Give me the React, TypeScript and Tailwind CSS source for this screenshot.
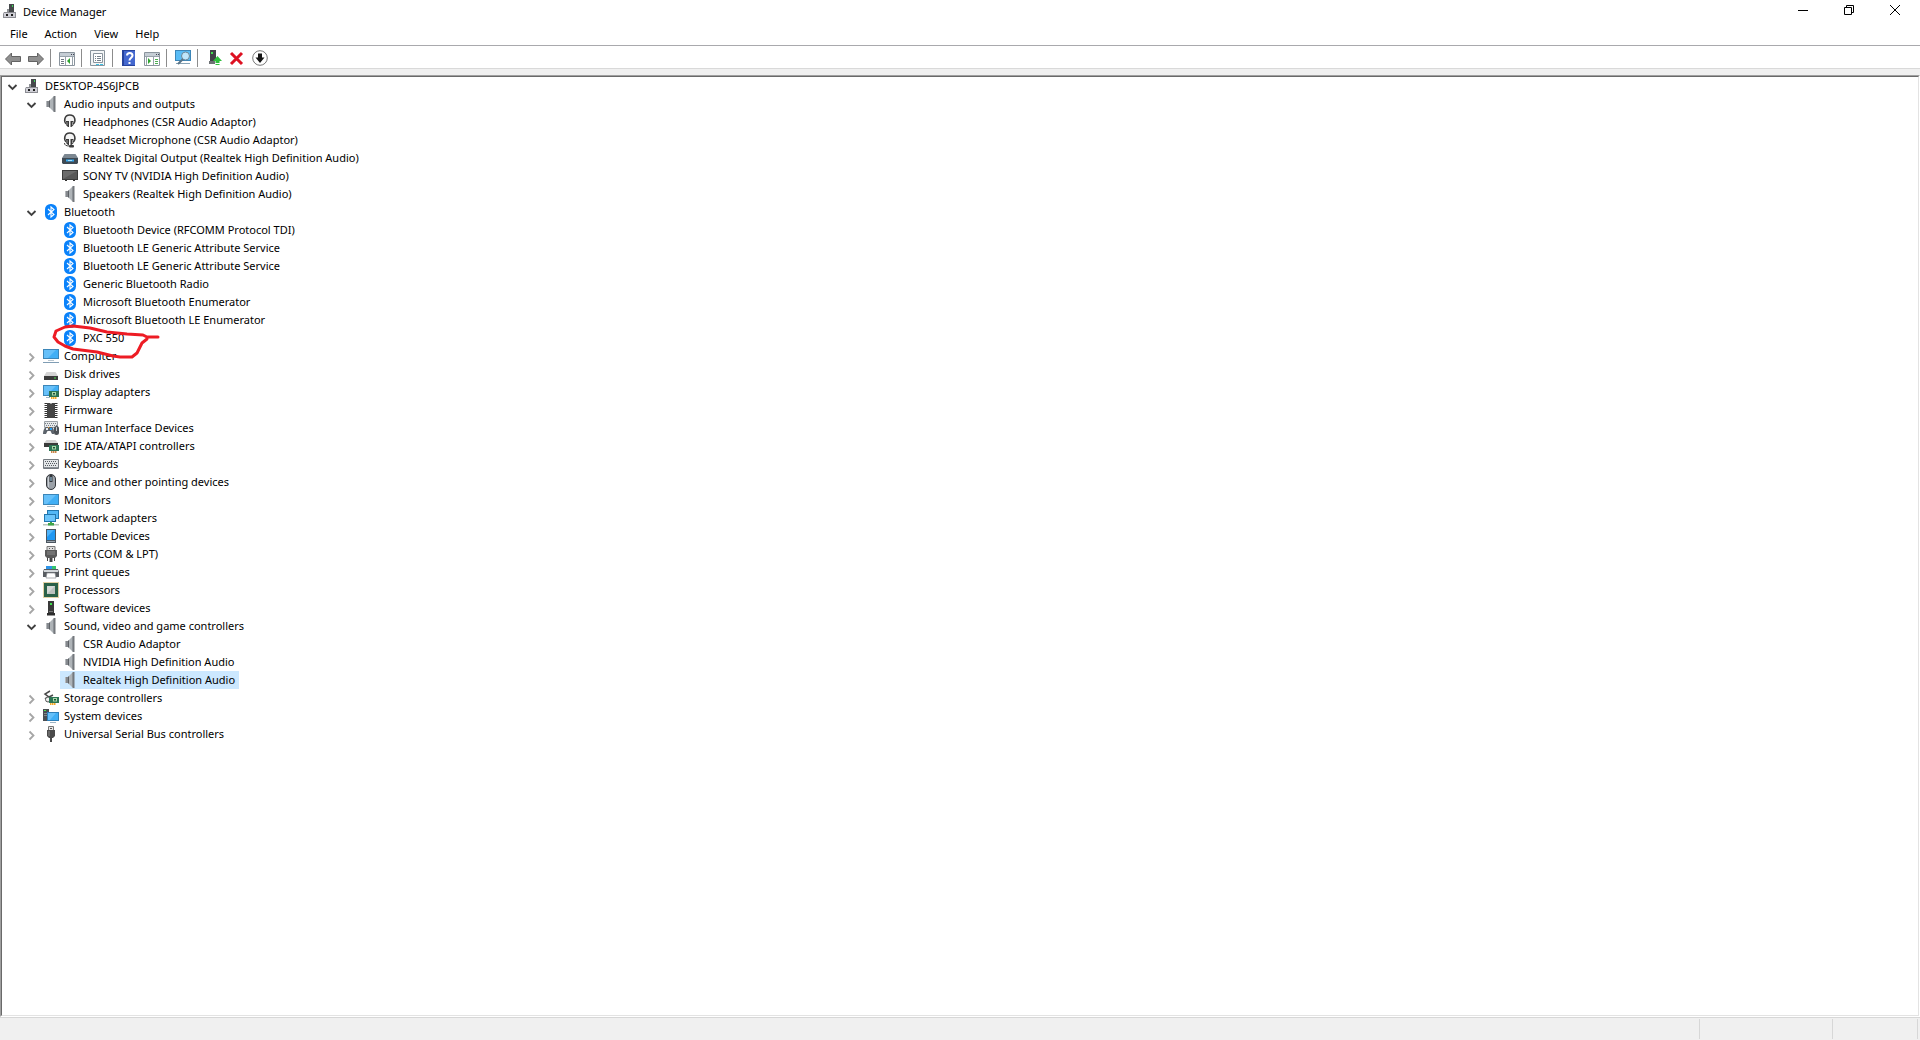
import { useState } from 'react';
import type { ReactNode } from 'react';

type Device = {
  name: string;
  icon: keyof typeof icons;
  open?: boolean;
  children?: Device[];
};

// every icon is drawn on a 16x16 grid
const icons = {
  pc: (
    <>
      <path d="M7 1h5v8H7z" fill="#45484b" />
      <path d="M10 2h1v2h-1z" fill="#3fd65a" />
      <path d="M5 6h2v3H5z" fill="#8f9296" />
      <path d="M2 9h12v6H1v-4z" fill="#8b8c92" />
      <path d="M2 10h11v4H2z" fill="#cfcfd6" />
      <path d="M4 11h2v2H4zM9 11h2v2H9z" fill="#1c1c1c" />
    </>
  ),
  speaker: (
    <>
      <path d="M3 5h3v6H3z" fill="#85898e" />
      <path d="M3 5h1v6H3z" fill="#b5b8bb" />
      <path d="M6 5l5-5v16l-5-5z" fill="#aeb3b7" />
      <path d="M6 5l1-1v8l-1-1z" fill="#5d6166" />
      <path d="M10 1l1-1v16l-1-1z" fill="#8b9095" />
      <path d="M11 0h1.5v16H11z" fill="#74787d" />
    </>
  ),
  headphones: (
    <>
      <path d="M4.5 10C1.5 8 2 1 7.8 1s6.3 7 3.3 9" fill="#f4f4f4" stroke="#3b3b3b" strokeWidth="1.5" />
      <path d="M4 7h3v6H6L4 11zM8.5 7h3v4l-2 2h-1z" fill="#3b3b3b" />
      <path d="M5 8v3M10.5 8v3" stroke="#999" />
    </>
  ),
  headset: (
    <>
      <path d="M4.5 10C1.5 8 2 1 7.8 1s6.3 7 3.3 9" fill="#f4f4f4" stroke="#3b3b3b" strokeWidth="1.5" />
      <path d="M4 7h3v6H6L4 11zM8.5 7h3v4l-2 2h-1z" fill="#3b3b3b" />
      <path d="M5 8v3M10.5 8v3" stroke="#999" />
      <path d="M2.5 11c0 2 1.5 3 5 3" fill="none" stroke="#3b3b3b" />
      <rect x="7" y="13" width="5" height="2.5" rx="1" fill="#3b3b3b" />
    </>
  ),
  receiver: (
    <>
      <path d="M2.5 4h11L16 8H0z" fill="#7c8791" />
      <path d="M0 8h16v5l-1 1H1l-1-1z" fill="#3f4a54" />
      <path d="M4 9.5h8v2H4z" fill="#35a8f0" />
      <path d="M6 10h4v1H6z" fill="#a8e0ff" />
    </>
  ),
  tv: (
    <>
      <path d="M0 2h16v10H0z" fill="#3a3a3a" />
      <path d="M1 3h14v8H1z" fill="#6a6a6a" />
      <path d="M1 11l14-8v8z" fill="#575757" />
      <path d="M3 12h2v1H3zM11 12h2v1h-2z" fill="#333" />
    </>
  ),
  bluetooth: (
    <>
      <rect x="2" y="0" width="12" height="16" rx="5.5" fill="#0a82fa" />
      <path d="M5 5l6 5.5-3 2.5V3l3 2.5L5 11" fill="none" stroke="#fff" strokeWidth="1.1" />
    </>
  ),
  computer: (
    <>
      <path d="M0 1h16v10H0z" fill="#3c86b8" />
      <path d="M1 2h14v8H1z" fill="#41aff5" />
      <path d="M1 2h12L5 10H1z" fill="#66c0f9" />
      <path d="M5 12h6v1H5z" fill="#b8c6d0" />
      <path d="M0 14h16v1H0z" fill="#7f9db4" />
    </>
  ),
  disk: (
    <>
      <path d="M3.5 6h9L15 10H1z" fill="#d4d4d4" />
      <path d="M1 10h14v4H1z" fill="#3b3b3b" />
      <path d="M11 11.5h2v1h-2z" fill="#4be04b" />
    </>
  ),
  display: (
    <>
      <path d="M0 1h16v11H0z" fill="#3c86b8" />
      <path d="M1 2h14v9H1z" fill="#41aff5" />
      <path d="M1 2h12L4 11H1z" fill="#66c0f9" />
      <path d="M3 13h4v1H3z" fill="#9db4c4" />
      <path d="M6 7h10v6H6z" fill="#2c7454" />
      <path d="M9 8h4v3.5H9z" fill="#a9d9a8" />
      <path d="M10 9h2v1.5h-2z" fill="#1d4f39" />
      <path d="M8 13h1.5v2H8zM10 13h1.5v2H10zM12 13h1.5v2H12z" fill="#efa927" />
    </>
  ),
  firmware: (
    <>
      <path d="M4 1h3l1 1 1-1h3v15H4z" fill="#454545" />
      <path d="M2.5 1v15M13.5 1v15" stroke="#333" strokeWidth="3" strokeDasharray="1 1" />
      <path d="M1.5 1v15M14.5 1v15" stroke="#999" strokeDasharray="1 1" />
    </>
  ),
  hid: (
    <>
      <path d="M1.5 1.5h13v6h-13z" fill="#e5e8ea" stroke="#9aa0a6" />
      <path d="M2 3.5h12M3 5.5h11" stroke="#7a8087" strokeDasharray="1 1" />
      <path d="M3 7h6c1.5 1 2.5 4 2 7H9L7.5 11h-3L3 14H0c0-3 1-6 3-7z" fill="#5d646c" />
      <path d="M3 8h2v2H3z" fill="#e9eef2" />
      <path d="M7 8h2v2H7z" fill="#2ea1f5" />
      <path d="M5 7h1v1H5z" fill="#f0a030" />
      <rect x="11" y="6" width="5" height="9" rx="2.5" fill="#4d5257" />
      <path d="M13.5 7v4" stroke="#c3c8cd" />
    </>
  ),
  ide: (
    <>
      <path d="M3.5 2h9L15 5H1z" fill="#d4d4d4" />
      <path d="M1 5h14v4H1z" fill="#3b3b3b" />
      <path d="M6 7h10v6H6z" fill="#2c7454" />
      <path d="M9 8h4v3.5H9z" fill="#a9d9a8" />
      <path d="M10 9h2v1.5h-2z" fill="#1d4f39" />
      <path d="M8 13h1.5v2H8zM10 13h1.5v2H10zM12 13h1.5v2H12z" fill="#c9874a" />
    </>
  ),
  keyboard: (
    <>
      <path d="M.5 3.5h15v9H.5z" fill="#e3e6e8" stroke="#747a80" />
      <path d="M2 5.5h12M3 7.5h11M2 9.5h12" stroke="#555b61" strokeDasharray="1 1" />
      <path d="M1 11h14v1H1z" fill="#8b9197" />
    </>
  ),
  mouse: (
    <>
      <rect x="3.5" y=".5" width="9" height="15" rx="4.5" fill="#9ba1a8" stroke="#33363a" />
      <path d="M5.5 3v10" stroke="#c9ced4" />
      <path d="M8 1v7" stroke="#33363a" strokeWidth="3" />
      <path d="M8 3v4" stroke="#9fd0ef" />
    </>
  ),
  monitor: (
    <>
      <path d="M0 2h16v11H0z" fill="#3c86b8" />
      <path d="M1 3h14v9H1z" fill="#41aff5" />
      <path d="M1 3h12L4 12H1z" fill="#66c0f9" />
      <path d="M4 14h8v1H4z" fill="#a7b9c5" />
    </>
  ),
  network: (
    <>
      <path d="M4 0h12v9H4z" fill="#2276ae" />
      <path d="M5 1h10v7H5z" fill="#52b7f6" />
      <path d="M1 4h12v8H1z" fill="#2276ae" />
      <path d="M2 5h10v6H2z" fill="#6cc5fb" />
      <path d="M7 12h2v2H7z" fill="#3ea549" />
      <path d="M0 14h16v1.5H0z" fill="#b9c4ba" />
      <path d="M5 13h6v2.5H5z" fill="#3ea549" />
    </>
  ),
  portable: (
    <>
      <path d="M3 1h10v14H3z" fill="#4b5660" />
      <path d="M4 2h8v10H4z" fill="#1f97f2" />
      <path d="M4 2h7L4 9z" fill="#4eb3fa" />
      <path d="M4 13h8v1H4z" fill="#9aa4ad" />
    </>
  ),
  port: (
    <>
      <path d="M4 .5h8v4H4z" fill="#ddd" stroke="#777" />
      <path d="M6 2h1v1H6zM9 2h1v1H9z" fill="#555" />
      <path d="M2 4h12v6l-2 2H4l-2-2z" fill="#5a5a5a" />
      <path d="M4 6h8M4 8h8" stroke="#8a8a8a" />
      <path d="M4.5 12v3M7 12v4h2v-4M11.5 12v3" fill="#444" stroke="#444" />
    </>
  ),
  printer: (
    <>
      <path d="M3 2h10v4H3z" fill="#2d94e8" />
      <path d="M9 2h4v3H9z" fill="#35c46b" />
      <path d="M1 5h14l1 3v5H0V8z" fill="#585c61" />
      <path d="M1 6h14v2H1z" fill="#d3d7da" />
      <path d="M4 9h8l1 5H3z" fill="#fff" stroke="#8a8e92" strokeWidth=".7" />
    </>
  ),
  processor: (
    <>
      <rect x=".5" y=".5" width="15" height="15" fill="none" stroke="#c8a44d" strokeDasharray="1 1" />
      <path d="M1 1h14v14H1z" fill="#2b6148" />
      <path d="M4 4h8v8H4z" fill="#d5d9d6" />
      <path d="M4 12l8-8v8z" fill="#bcc2be" />
    </>
  ),
  software: (
    <>
      <path d="M5 1h6v12H5z" fill="#3a3a3a" />
      <path d="M7 3h2v2H7z" fill="#41e04d" />
      <path d="M4 13h8v2.5H4z" fill="#2d2d2d" />
      <path d="M6 11h4v1H6z" fill="#777" />
    </>
  ),
  storage: (
    <>
      <path d="M7 1L2 4l4 3 4-2M2 8l4 3" fill="none" stroke="#4a4a4a" strokeWidth="1.5" />
      <circle cx="5" cy="9.5" r="2.5" fill="#eee" stroke="#555" />
      <path d="M6 7h10v6H6z" fill="#2c7454" />
      <path d="M10 8h4v3.5h-4z" fill="#a9d9a8" />
      <path d="M11 9h2v1.5h-2z" fill="#1d4f39" />
      <path d="M7 13h1.5v2H7zM9 13h1.5v2H9zM11 13h1.5v2H11z" fill="#efa927" />
    </>
  ),
  system: (
    <>
      <path d="M0 1h6v12H0z" fill="#4a4e52" />
      <path d="M1 2h2v1H1z" fill="#4be04b" />
      <path d="M1 5h3v1H1zM1 7h3v1H1z" fill="#85898d" />
      <path d="M4 4h12v9H4z" fill="#2e7fb8" />
      <path d="M5 5h10v7H5z" fill="#41aff5" />
      <path d="M5 5h8l-6 7H5z" fill="#66c0f9" />
      <path d="M7 14h6v1H7z" fill="#9db4c4" />
    </>
  ),
  usb: (
    <>
      <path d="M5.5.5h5v4h-5z" fill="#e4e4e4" stroke="#777" />
      <path d="M7 2h2v1H7z" fill="#555" />
      <path d="M4 4h8v6l-2 2H6l-2-2z" fill="#4a4a4a" />
      <path d="M6 5v5" stroke="#888" />
      <path d="M8 12v4" stroke="#4a4a4a" strokeWidth="2" />
    </>
  ),
  back: <path d="M.5 8l6-6v3.5h9v5h-9V14z" fill="#8f8f8f" stroke="#636363" />,
  forward: <path d="M15.5 8l-6-6v3.5h-9v5h9V14z" fill="#8f8f8f" stroke="#636363" />,
  consoleTree: (
    <>
      <path d="M.5 2.5h15v13H.5z" fill="#fff" stroke="#8a949d" />
      <path d="M1 3h14v3H1z" fill="#c5cdd4" />
      <path d="M12 4h1v1h-1zM14 4h1v1h-1z" fill="#445" />
      <path d="M1 6.5h14M6.5 7v8M13.5 7v8" stroke="#98a2ab" />
      <path d="M2 9.5h3M2 11.5h3M2 13.5h3" stroke="#6d7780" />
      <path d="M11 8v6l-3-3z" fill="#2fa52f" />
    </>
  ),
  properties: (
    <>
      <path d="M.5.5h14v15H.5z" fill="#f3f5f6" stroke="#8a949d" />
      <path d="M3.5 3.5h9v9h-9z" fill="#fff" stroke="#8a949d" />
      <path d="M5 6.5h1M5 8.5h1M5 10.5h1M7 6.5h4M7 8.5h4M7 10.5h4" stroke="#76818b" />
      <path d="M6 14.5h3M10 14.5h3" stroke="#3dc2e6" />
    </>
  ),
  help: (
    <>
      <path d="M1 0h13v16H1z" fill="#27439c" />
      <path d="M3 1h11v14H3z" fill="#4468cf" />
      <path d="M6 5.5C6 2 11.5 2 11.5 5.5c0 2-3 2.5-3 5M8.5 12v2" fill="none" stroke="#fff" strokeWidth="2" />
    </>
  ),
  actionPane: (
    <>
      <path d="M.5 2.5h15v13H.5z" fill="#fff" stroke="#8a949d" />
      <path d="M1 3h14v3H1z" fill="#c5cdd4" />
      <path d="M12 4h1v1h-1zM14 4h1v1h-1z" fill="#445" />
      <path d="M1 6.5h14M9.5 7v8M2.5 7v8" stroke="#98a2ab" />
      <path d="M11 9.5h3M11 11.5h3M11 13.5h3" stroke="#4caf50" />
      <path d="M4 8v6l3-3z" fill="#2fa52f" />
    </>
  ),
  scan: (
    <>
      <path d="M0 0h16v11H0z" fill="#3c86b8" />
      <path d="M1 1h14v9H1z" fill="#58bcf6" />
      <path d="M1 13h14v1H1z" fill="#8aa4b6" />
      <circle cx="10.5" cy="6" r="4" fill="#bfe6fb" stroke="#6c8798" />
      <path d="M8 9l-5 5" stroke="#5a7588" strokeWidth="2" />
    </>
  ),
  update: (
    <>
      <path d="M4 0h6v11H4z" fill="#3f4245" />
      <path d="M5 2h2v2H5z" fill="#41e04d" />
      <path d="M3 11h6v3H3z" fill="#6e7275" />
      <path d="M11.5 6l4.5 5h-2.5v2h-4v-2H7zM9.5 14h4v1h-4z" fill="#2fbf3c" />
    </>
  ),
  uninstall: <path d="M2 3l11 11M13 3L2 14" stroke="#dd1122" strokeWidth="3" />,
  disable: (
    <>
      <circle cx="8" cy="8" r="7.3" fill="#fff" stroke="#777" />
      <path d="M6 3.500h4v4h2.500L8 13 3.500 7.500H6z" fill="#151515" />
    </>
  ),
};

const tree: Device = {
  name: 'DESKTOP-4S6JPCB',
  icon: 'pc',
  open: true,
  children: [
    {
      name: 'Audio inputs and outputs',
      icon: 'speaker',
      open: true,
      children: [
        { name: 'Headphones (CSR Audio Adaptor)', icon: 'headphones' },
        { name: 'Headset Microphone (CSR Audio Adaptor)', icon: 'headset' },
        { name: 'Realtek Digital Output (Realtek High Definition Audio)', icon: 'receiver' },
        { name: 'SONY TV (NVIDIA High Definition Audio)', icon: 'tv' },
        { name: 'Speakers (Realtek High Definition Audio)', icon: 'speaker' },
      ],
    },
    {
      name: 'Bluetooth',
      icon: 'bluetooth',
      open: true,
      children: [
        { name: 'Bluetooth Device (RFCOMM Protocol TDI)', icon: 'bluetooth' },
        { name: 'Bluetooth LE Generic Attribute Service', icon: 'bluetooth' },
        { name: 'Bluetooth LE Generic Attribute Service', icon: 'bluetooth' },
        { name: 'Generic Bluetooth Radio', icon: 'bluetooth' },
        { name: 'Microsoft Bluetooth Enumerator', icon: 'bluetooth' },
        { name: 'Microsoft Bluetooth LE Enumerator', icon: 'bluetooth' },
        { name: 'PXC 550', icon: 'bluetooth' },
      ],
    },
    { name: 'Computer', icon: 'computer', children: [] },
    { name: 'Disk drives', icon: 'disk', children: [] },
    { name: 'Display adapters', icon: 'display', children: [] },
    { name: 'Firmware', icon: 'firmware', children: [] },
    { name: 'Human Interface Devices', icon: 'hid', children: [] },
    { name: 'IDE ATA/ATAPI controllers', icon: 'ide', children: [] },
    { name: 'Keyboards', icon: 'keyboard', children: [] },
    { name: 'Mice and other pointing devices', icon: 'mouse', children: [] },
    { name: 'Monitors', icon: 'monitor', children: [] },
    { name: 'Network adapters', icon: 'network', children: [] },
    { name: 'Portable Devices', icon: 'portable', children: [] },
    { name: 'Ports (COM & LPT)', icon: 'port', children: [] },
    { name: 'Print queues', icon: 'printer', children: [] },
    { name: 'Processors', icon: 'processor', children: [] },
    { name: 'Software devices', icon: 'software', children: [] },
    {
      name: 'Sound, video and game controllers',
      icon: 'speaker',
      open: true,
      children: [
        { name: 'CSR Audio Adaptor', icon: 'speaker' },
        { name: 'NVIDIA High Definition Audio', icon: 'speaker' },
        { name: 'Realtek High Definition Audio', icon: 'speaker' },
      ],
    },
    { name: 'Storage controllers', icon: 'storage', children: [] },
    { name: 'System devices', icon: 'system', children: [] },
    { name: 'Universal Serial Bus controllers', icon: 'usb', children: [] },
  ],
};

const toolbar: { label: string; icon: keyof typeof icons }[][] = [
  [
    { label: 'Back', icon: 'back' },
    { label: 'Forward', icon: 'forward' },
  ],
  [{ label: 'Show/Hide Console Tree', icon: 'consoleTree' }],
  [{ label: 'Properties', icon: 'properties' }],
  [
    { label: 'Help', icon: 'help' },
    { label: 'Show/Hide Action Pane', icon: 'actionPane' },
  ],
  [{ label: 'Scan for hardware changes', icon: 'scan' }],
  [
    { label: 'Update driver', icon: 'update' },
    { label: 'Uninstall device', icon: 'uninstall' },
    { label: 'Disable device', icon: 'disable' },
  ],
];

function Icon({ name }: { name: keyof typeof icons }) {
  return (
    <svg viewBox="0 0 16 16" className="h-4 w-4 shrink-0" aria-hidden="true">
      {icons[name]}
    </svg>
  );
}

function WindowButton({ label, children }: { label: string; children: ReactNode }) {
  return (
    <button aria-label={label} className="flex h-5 w-[46px] items-center justify-center hover:bg-[#e5e5e5]">
      <svg viewBox="0 0 10 10" className="h-2.5 w-2.5" fill="none" stroke="#000">
        {children}
      </svg>
    </button>
  );
}

function TreeNode({ device, selected, onSelect }: { device: Device; selected: string; onSelect: (name: string) => void }) {
  const [open, setOpen] = useState(!!device.open);

  return (
    <li role="treeitem" aria-expanded={device.children ? open : undefined}>
      <div className="flex h-[18px] items-center">
        {device.children ? (
          <button aria-label={`Toggle ${device.name}`} onClick={() => setOpen(!open)} className="h-4 w-4 shrink-0">
            <svg viewBox="0 0 16 16" className="h-4 w-4" fill="none" strokeWidth="1.8">
              {open ? <path d="M4.500 7l4 4 4-4" stroke="#404040" /> : <path d="M6.500 5.500l4 4-4 4" stroke="#a6a6a6" />}
            </svg>
          </button>
        ) : (
          <span className="w-4 shrink-0" />
        )}
        <button
          onClick={() => onSelect(device.name)}
          className={
            selected === device.name
              ? 'ml-0.5 flex h-[18px] items-center gap-[5px] bg-[#cce8ff] pr-1 pl-0.5 whitespace-nowrap'
              : 'ml-0.5 flex h-[18px] items-center gap-[5px] pr-1 pl-0.5 whitespace-nowrap'
          }
        >
          <Icon name={device.icon} />
          {device.name}
        </button>
      </div>
      {open && device.children && device.children.length > 0 && (
        <ul role="group" className="pl-[19px]">
          {device.children.map((child, i) => (
            <TreeNode key={i} device={child} selected={selected} onSelect={onSelect} />
          ))}
        </ul>
      )}
    </li>
  );
}

export default function App() {
  const [selected, setSelected] = useState('Realtek High Definition Audio');

  return (
    <div className="flex min-h-screen flex-col bg-white font-['Noto_Sans',sans-serif] text-[11px] leading-4 text-black">
      <header className="flex h-6 items-start justify-between pr-0.5">
        <div className="flex items-start gap-[5px] pt-[3px] pl-0.5">
          <Icon name="pc" />
          <h1 className="leading-[18px]">Device Manager</h1>
        </div>
        <div className="flex">
          <WindowButton label="Minimize">
            <path d="M0 5.500h10" />
          </WindowButton>
          <WindowButton label="Restore">
            <path d="M.5 2.500h7v7h-7zM2.500 2V.5h7v7H8" />
          </WindowButton>
          <WindowButton label="Close">
            <path d="M0 0l10 10M10 0L0 10" />
          </WindowButton>
        </div>
      </header>

      <nav className="flex h-[22px] items-start gap-px border-b border-[#a9a9ad] pt-px pl-0.5">
        {['File', 'Action', 'View', 'Help'].map((item) => (
          <button key={item} className="px-2 leading-[18px] hover:bg-[#e5f3ff]">
            {item}
          </button>
        ))}
      </nav>

      <div role="toolbar" className="flex h-[23px] items-end border-b border-[#d9d9d9] pb-px pl-0.5">
        {toolbar.map((group, i) => (
          <div key={i} className="flex items-center">
            {i > 0 && <span className="mr-[5px] ml-0.5 h-[18px] w-px bg-[#8c8c8c]" />}
            {group.map((tool) => (
              <button key={tool.label} aria-label={tool.label} className="w-[23px] pl-[3px]">
                <Icon name={tool.icon} />
              </button>
            ))}
          </div>
        ))}
      </div>

      <main className="flex flex-1 flex-col bg-[#f0f0f0] pt-1.5">
        <div className="flex flex-1 flex-col border border-t-[#a0a0a0] border-r-white border-b-white border-l-[#a0a0a0]">
          <div className="relative flex-1 border border-t-[#696969] border-r-[#e3e3e3] border-b-[#e3e3e3] border-l-[#696969] bg-white">
            <ul role="tree" className="pl-0.5">
              <TreeNode device={tree} selected={selected} onSelect={setSelected} />
            </ul>
            {/* hand-drawn ring around the PXC 550 entry */}
            <svg viewBox="0 0 112 36" className="pointer-events-none absolute top-[246px] left-[50px] h-9 w-28" fill="none">
              <path
                d="M106 14H95l-4-2-16-1-20-2-17-4-17-2-8 1-9 4-2 6 4 5 7 4 8 3 24 3 16 4 7 1h12l5-4 5-10 5-4"
                stroke="#ed1c24"
                strokeWidth="3"
                strokeLinecap="round"
                strokeLinejoin="round"
              />
            </svg>
          </div>
        </div>
      </main>

      <footer className="flex h-[23px] border-t border-[#d7d7d7] bg-[#f0f0f0] py-px pr-0.5">
        <div className="flex-1 border-r border-[#d7d7d7]" />
        <div className="w-[133px] border-r border-[#d7d7d7]" />
        <div className="w-[85px] border-r border-[#d7d7d7]" />
      </footer>
    </div>
  );
}
